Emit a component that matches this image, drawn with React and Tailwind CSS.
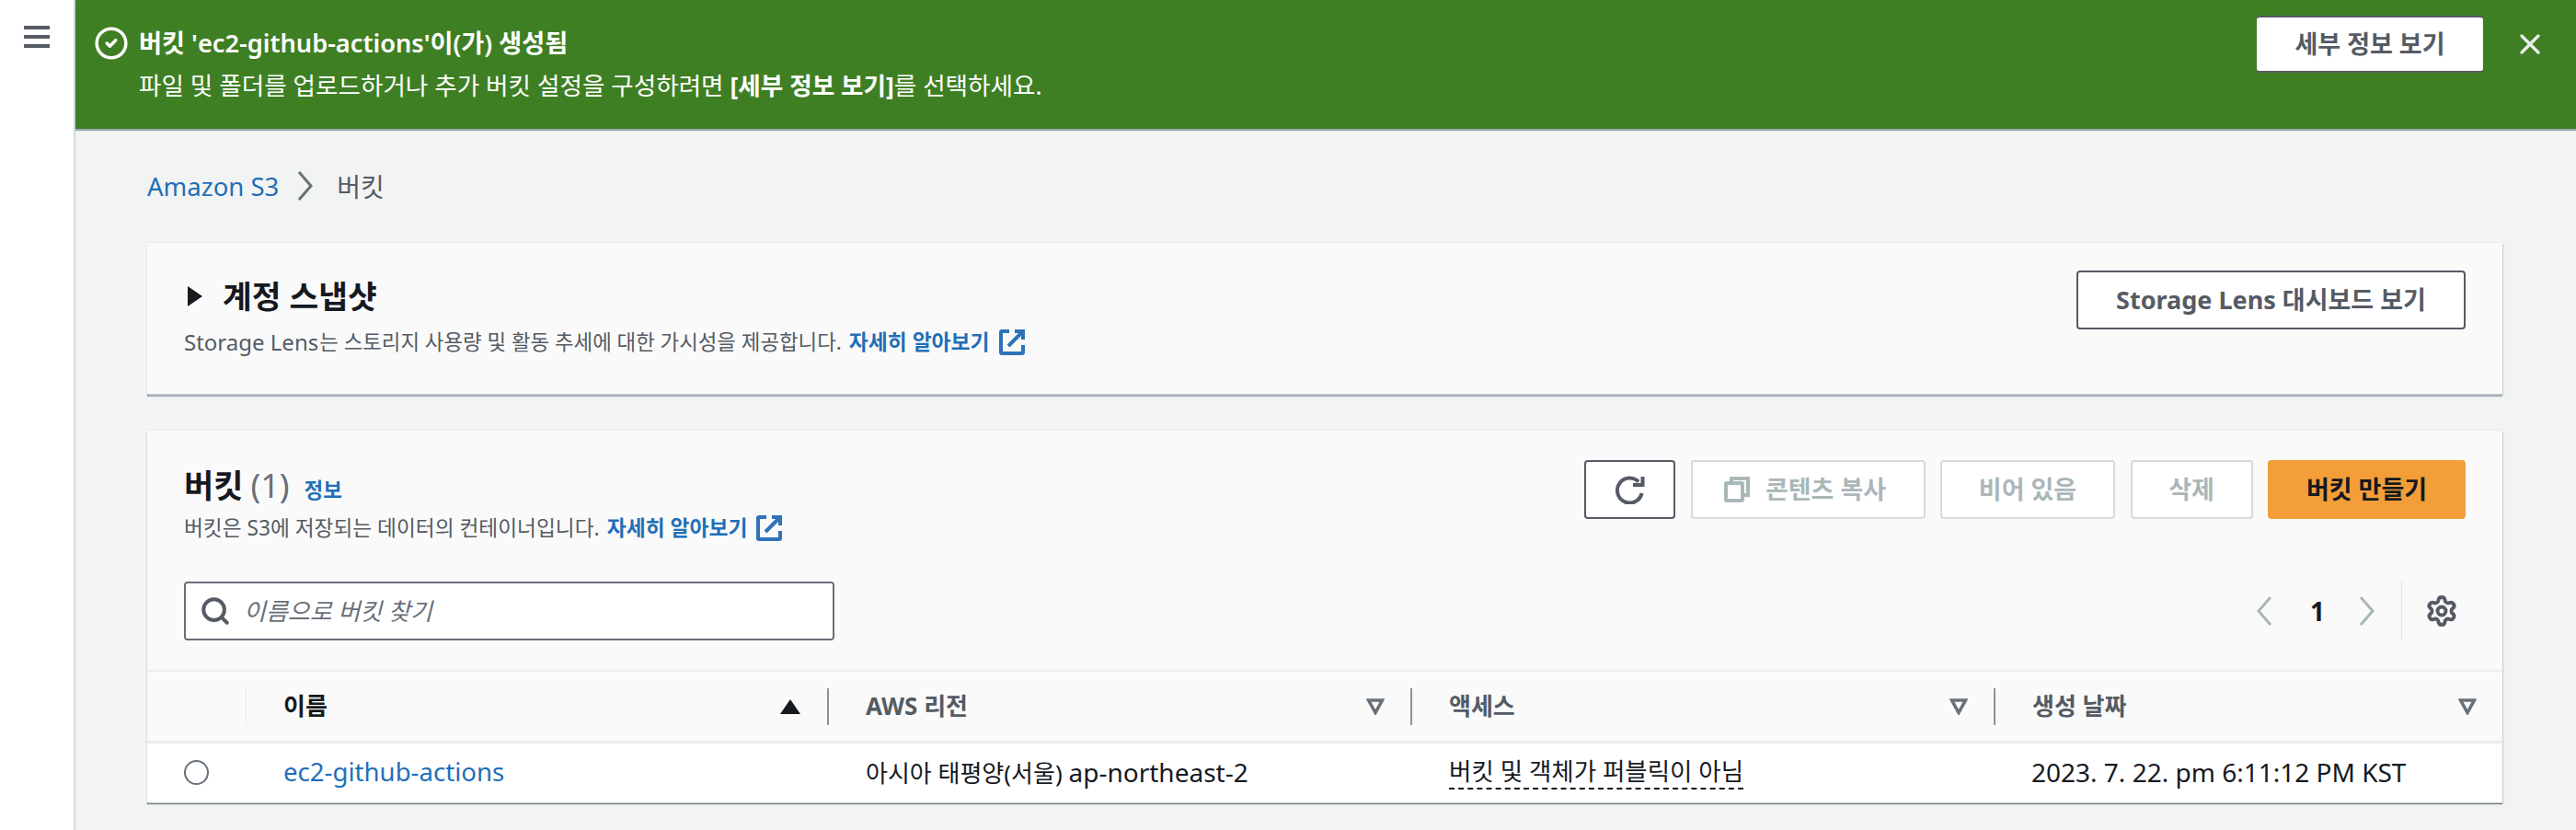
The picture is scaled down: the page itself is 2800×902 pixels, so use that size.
import { Search, Settings, X, CircleCheck } from "lucide-react";

const font = "font-['Noto_Sans','Noto_Sans_CJK_KR',sans-serif]";

const LearnMore = () => (
  <a className="inline-flex items-center font-bold text-[22.8px] text-[#1f6fb8] ml-2 gap-[10px]">
    자세히 알아보기
    <svg width="28" height="28" viewBox="0 0 28 28" fill="none" stroke="#2e73b8" strokeWidth="4">
      <path d="M11 2H3a1 1 0 0 0-1 1v22a1 1 0 0 0 1 1h22a1 1 0 0 0 1-1V17" />
      <path d="M17 2h9v9M26 2L10 18" />
    </svg>
  </a>
);

const SortDown = () => (
  <svg width="20" height="18" viewBox="0 0 20 18" fill="none" stroke="#687078" strokeWidth="3.5">
    <path d="M2.5 2h15L10 15.5z" />
  </svg>
);

const Chevron = ({ left, className }) => (
  <svg width="18" height="32" viewBox="0 0 18 32" fill="none" stroke="currentColor" strokeWidth="3" className={className}>
    <path d={left ? "M16 1L3 16l13 15" : "M2 1l13 15L2 31"} />
  </svg>
);

const GhostButton = ({ children, className }) => (
  <button className={`h-16 rounded-sm border-2 border-[#d5dbdb] bg-white text-[27px] font-bold text-[#aab7b8] flex items-center justify-center ${className}`}>
    {children}
  </button>
);

const headCols = ["AWS 리전", "액세스", "생성 날짜"];

export default function App() {
  return (
    <div className={`${font} flex h-[902px] w-[2800px] overflow-hidden bg-white text-[#16191f]`}>
      {/* left rail */}
      <div className="w-20 shrink-0 pt-7 flex justify-center">
        <div className="flex flex-col gap-[6px] w-7">
          <div className="h-1 bg-[#545b64]" />
          <div className="h-1 bg-[#545b64]" />
          <div className="h-1 bg-[#545b64]" />
        </div>
      </div>

      <div className="flex-1 bg-[#f2f3f3] border-l-2 border-[#d5dbdb] min-w-0">
        {/* flash banner */}
        <div className="h-[140px] bg-[#3f7f24] text-white flex items-start pl-[20px] pr-[32px] pt-[17px] shadow-[0_2px_1px_#9aa5ad]">
          <CircleCheck className="mt-[11px] shrink-0" size={38} strokeWidth={2.2} />
          <div className="ml-[11px] flex-1 text-[26.6px] leading-10 pt-2">
            <div className="font-semibold text-[27.2px] leading-[44px]">버킷 'ec2-github-actions'이(가) 생성됨</div>
            <div className="mt-1">
              파일 및 폴더를 업로드하거나 추가 버킷 설정을 구성하려면 <b>[세부 정보 보기]</b>를 선택하세요.
            </div>
          </div>
          <button className="w-[246px] h-[62px] bg-white rounded-sm border-y-2 border-[#545b64] text-[27px] font-bold text-[#545b64]">
            세부 정보 보기
          </button>
          <X className="ml-[33px] mt-[13px] text-[#eaeded]" size={36} strokeWidth={2.2} />
        </div>

        {/* breadcrumb */}
        <div className="pl-[78px] pt-[43px] h-[124px] flex items-start text-[28px] leading-10">
          <a className="text-[#1f6fb8] text-[27.5px]">Amazon S3</a>
          <Chevron className="ml-[20px] mr-[25px] mt-[3px] text-[#687078]" />
          <span className="text-[#545b64]">버킷</span>
        </div>

        <div className="ml-[78px] w-[2560px]">
          {/* account snapshot */}
          <div className="h-[164px] bg-[#fafafa] shadow-[0_-1px_1px_#eaeded,1px_1px_1px_#c4cace,0_3px_1px_#a5adb5] flex justify-between pl-10 pr-10 pt-[30px]">
            <div>
              <div className="flex items-center">
                <div className="w-0 h-0 border-y-[11px] border-y-transparent border-l-[16px] border-l-[#16191f] ml-1 mr-[22px]" />
                <h2 className="text-[34.5px] leading-[56px] font-bold">계정 스냅샷</h2>
              </div>
              <p className="flex items-center text-[22.4px] leading-9 text-[#545b64] mt-1">
                <span className="text-[24px] mr-[1px]">Storage Lens</span>는 스토리지 사용량 및 활동 추세에 대한 가시성을 제공합니다.
                <LearnMore />
              </p>
            </div>
            <button className="w-[423px] h-16 bg-white rounded-sm border-2 border-[#545b64] text-[27px] font-bold text-[#545b64]">
              Storage Lens 대시보드 보기
            </button>
          </div>

          {/* buckets */}
          <div className="mt-10 h-[404px] bg-[#fafafa] shadow-[0_-1px_1px_#eaeded,1px_1px_1px_#c4cace,0_2px_1px_#687078] flex flex-col">
            <div className="h-[262px] border-b-2 border-[#eaeded] pl-10 pr-10 pt-8">
              <div className="flex justify-between h-[132px]">
                <div>
                  <div className="flex items-baseline">
                    <h2 className="text-[35px] leading-[56px] font-bold">버킷</h2>
                    <span className="text-[36px] text-[#687078] ml-[8px]">(1)</span>
                    <a className="text-[22.5px] font-bold text-[#1f6fb8] ml-4">정보</a>
                  </div>
                  <p className="flex items-center text-[22.7px] leading-9 text-[#545b64]">
                    버킷은 S3에 저장되는 데이터의 컨테이너입니다.
                    <LearnMore />
                  </p>
                </div>
                <div className="flex gap-[16.5px]">
                  <button className="w-[99px] h-16 bg-white rounded-sm border-2 border-[#545b64] flex items-center justify-center">
                    <svg width="32" height="32" viewBox="0 0 32 32" fill="none" stroke="#545b64" strokeWidth="4">
                      <path d="M25 7.5A13.5 13.5 0 1 0 28.6 20" />
                      <path d="M19 11h12M29.5 2v11" />
                    </svg>
                  </button>
                  <GhostButton className="w-[255px] gap-[17px] pr-1.5">
                    <svg width="28" height="28" viewBox="0 0 28 28" fill="none" stroke="#aab7b8" strokeWidth="4">
                      <rect x="2" y="7" width="18" height="19" rx="1" />
                      <path d="M8 7V2h18v18h-6" />
                    </svg>
                    콘텐츠 복사
                  </GhostButton>
                  <GhostButton className="w-[190px]">비어 있음</GhostButton>
                  <GhostButton className="w-[133px]">삭제</GhostButton>
                  <button className="w-[215px] h-16 rounded-sm bg-[#f39e38] text-[27px] font-bold text-[#16191f]">
                    버킷 만들기
                  </button>
                </div>
              </div>
              <div className="flex justify-between">
                <div className="w-[707px] h-16 bg-white rounded-sm border-2 border-[#687078] flex items-center pl-[15px] text-[#545b64]">
                  <Search size={34} strokeWidth={2.8} />
                  <span className="ml-[14px] text-[26px] italic text-[#687078]">이름으로 버킷 찾기</span>
                </div>
                <div className="flex items-center pr-2">
                  <Chevron left className="text-[#aab7b8]" />
                  <span className="ml-[41px] mr-[41px] w-[12px] text-[28px] font-bold">1</span>
                  <Chevron className="text-[#aab7b8]" />
                  <div className="h-16 w-px bg-[#e3e6e6] ml-[28px] mr-[25px]" />
                  <Settings className="text-[#545b64]" size={36} strokeWidth={2.6} />
                </div>
              </div>
            </div>

            {/* table head */}
            <div className="grid grid-cols-[108px_633px_634px_634px_1fr] h-[78px] border-b-[3px] border-[#eaeded] items-center text-[26px] font-bold">
              <div className="h-10 border-r border-[#eaeded]" />
              <div className="h-10 flex items-center justify-between pl-[40px] pr-[29px] border-r-2 border-[#879596]">
                <span>이름</span>
                <div className="w-0 h-0 border-x-[11px] border-x-transparent border-b-[16px] border-b-[#16191f]" />
              </div>
              {headCols.map((label, i) => (
                <div key={label} className={`h-10 flex items-center justify-between pl-[40px] pr-[28px] text-[#545b64] ${i < 2 ? "border-r-2 border-[#879596]" : ""}`}>
                  <span>{label}</span>
                  <SortDown />
                </div>
              ))}
            </div>

            {/* row */}
            <div className="grid grid-cols-[108px_633px_634px_634px_1fr] flex-1 bg-white items-center text-[26px] pb-0.5">
              <div className="pl-10">
                <div className="w-[27px] h-[27px] rounded-full border-2 border-[#687078] bg-white" />
              </div>
              <a className="pl-[40px] text-[27.6px] text-[#1f6fb8]">ec2-github-actions</a>
              <div className="pl-[40px]">
                아시아 태평양(서울) <span className="text-[28px]">ap-northeast-2</span>
              </div>
              <div className="pl-[40px]">
                <span className="border-b-2 border-dashed border-[#16191f] text-[26.5px]">버킷 및 객체가 퍼블릭이 아님</span>
              </div>
              <div className="pl-[39px] text-[28px]">2023. 7. 22. pm 6:11:12 PM KST</div>
            </div>
          </div>
        </div>
      </div>
    </div>
  );
}
